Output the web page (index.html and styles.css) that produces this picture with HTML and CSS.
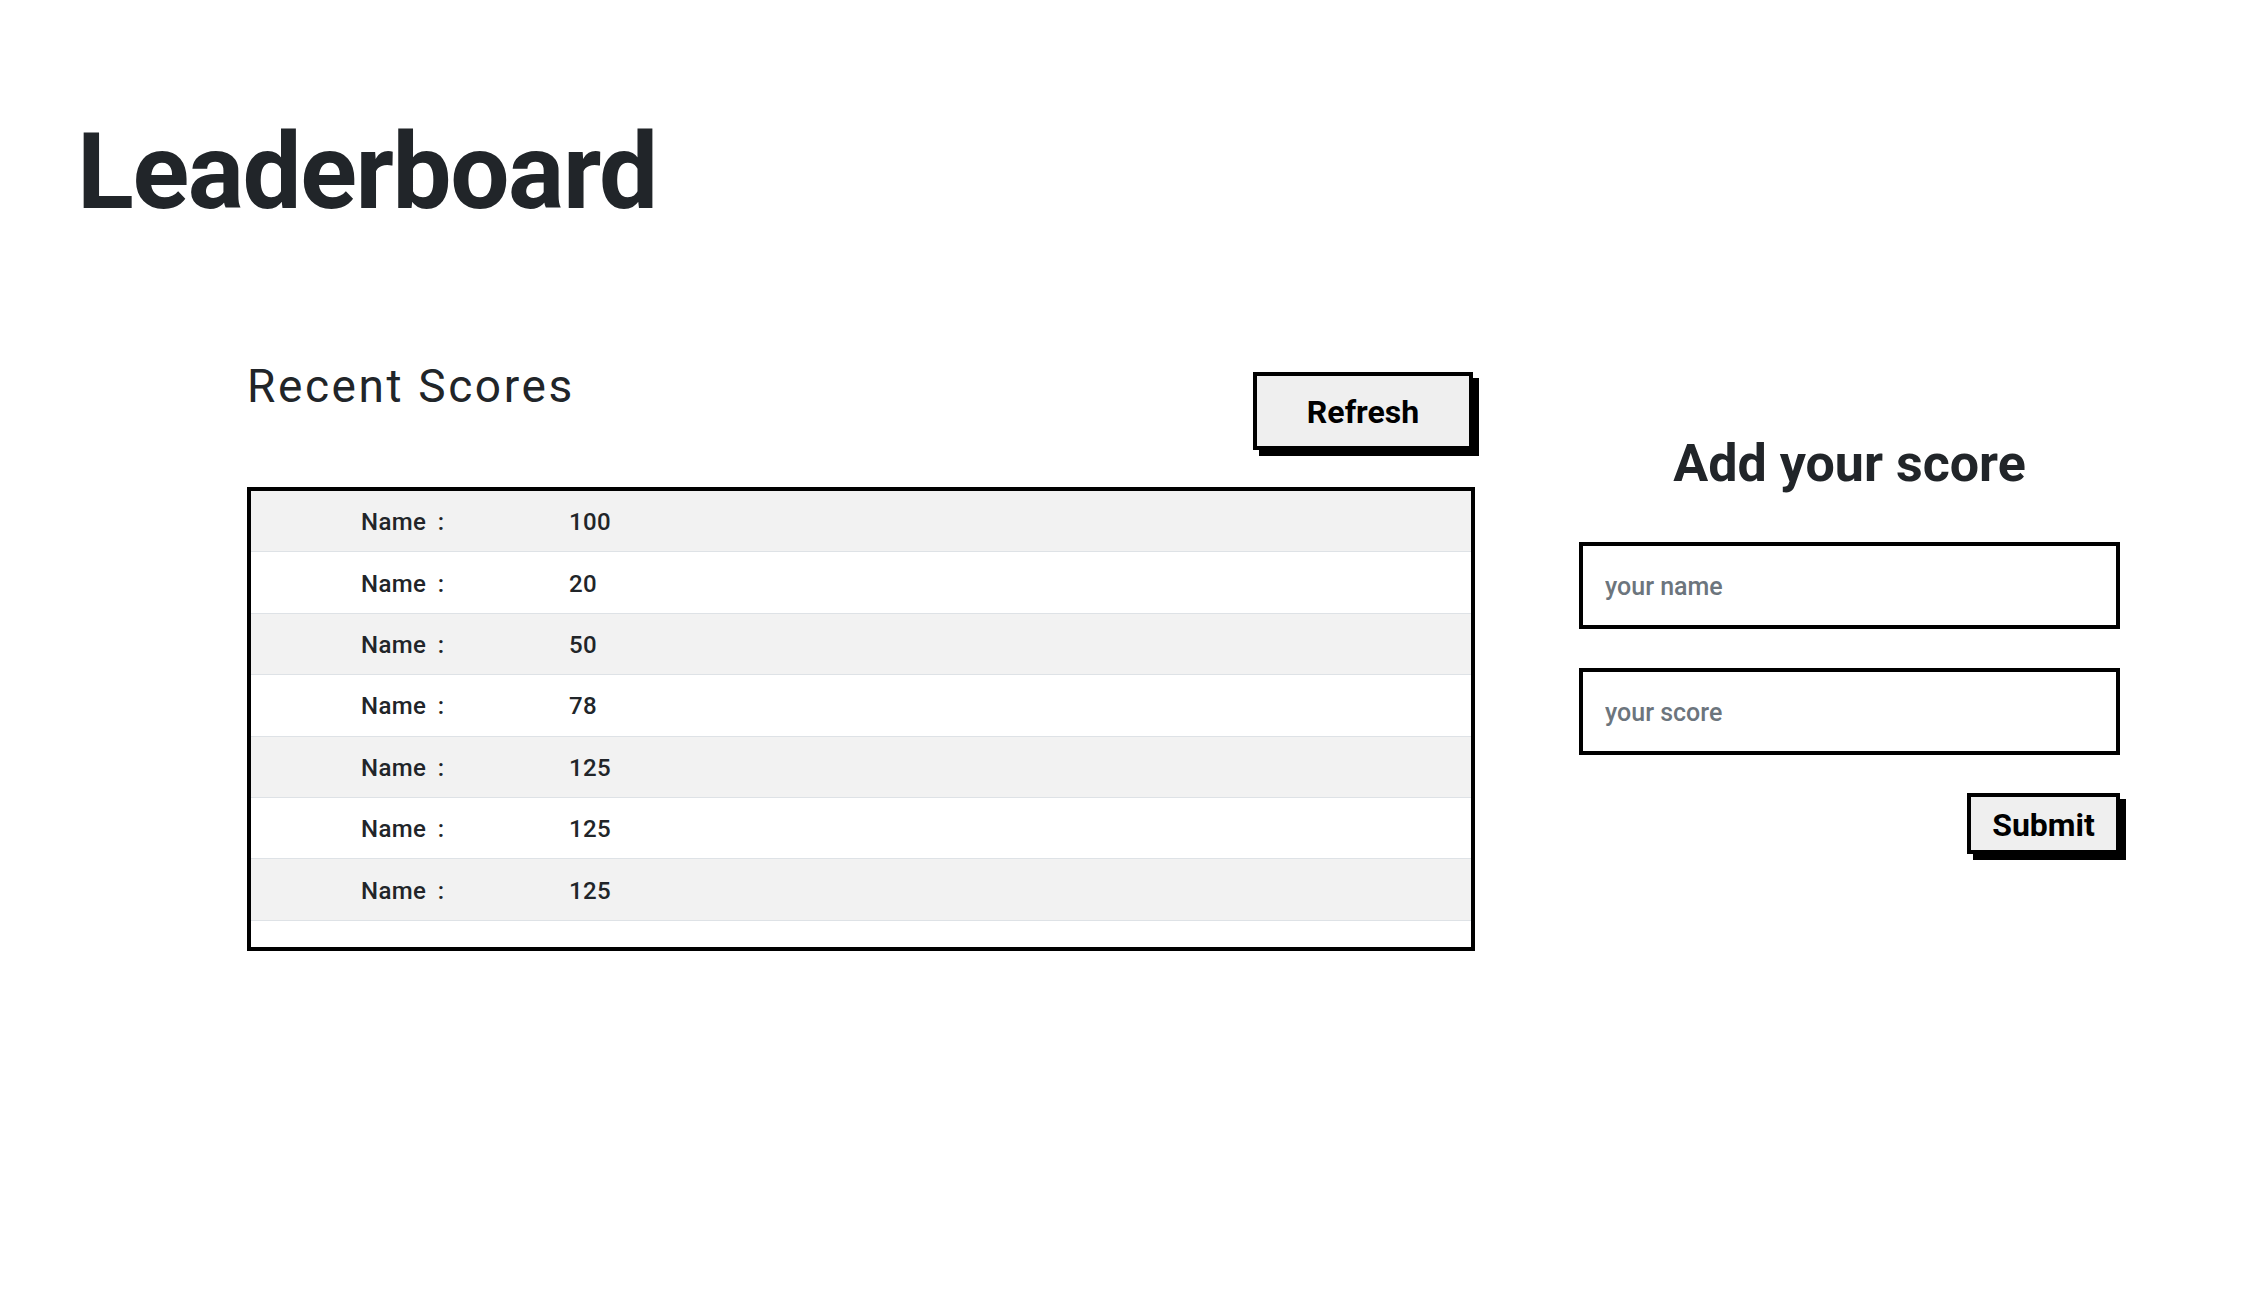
FILE: index.html
```html
<!DOCTYPE html>
<html lang="en">
<head>
<meta charset="utf-8">
<title>Leaderboard</title>
<link rel="stylesheet" href="styles.css">
</head>
<body>
<div class="page">
  <h1 class="title">Leaderboard</h1>
  <main class="main">
    <section class="scores">
      <div class="scores-head">
        <h2 class="scores-title">Recent Scores</h2>
        <button class="btn btn-refresh" type="button">Refresh</button>
      </div>
      <div class="table">
        <div class="row"><span class="name">Name :</span><span class="score">100</span></div>
        <div class="row"><span class="name">Name :</span><span class="score">20</span></div>
        <div class="row"><span class="name">Name :</span><span class="score">50</span></div>
        <div class="row"><span class="name">Name :</span><span class="score">78</span></div>
        <div class="row"><span class="name">Name :</span><span class="score">125</span></div>
        <div class="row"><span class="name">Name :</span><span class="score">125</span></div>
        <div class="row"><span class="name">Name :</span><span class="score">125</span></div>
      </div>
    </section>
    <section class="add">
      <h2 class="add-title">Add your score</h2>
      <form class="add-form">
        <input class="field" type="text" placeholder="your name">
        <input class="field" type="text" placeholder="your score">
        <div class="actions"><button class="btn btn-submit" type="button">Submit</button></div>
      </form>
    </section>
  </main>
</div>
</body>
</html>
```

FILE: styles.css
```css
html, body {
  margin: 0;
  padding: 0;
  background: #ffffff;
}

body {
  font-family: Roboto, "Open Sans", sans-serif;
  color: #212529;
}

.page {
  min-height: 1290px;
}

.title {
  margin: 0;
  padding: 120px 0 0 77px;
  font-size: 105px;
  line-height: 105px;
  font-weight: 700;
  letter-spacing: -1.4px;
}

.main {
  display: flex;
  margin-top: 138px;
  padding-left: 247px;
}

.scores {
  width: 1228px;
}

.scores-head {
  display: flex;
  justify-content: space-between;
  align-items: flex-start;
  height: 87px;
}

.scores-title {
  margin: 0;
  font-size: 46px;
  line-height: 46px;
  font-weight: 400;
  letter-spacing: 2.6px;
}

.btn {
  box-sizing: border-box;
  border: 4px solid #000;
  background: #efefef;
  box-shadow: 6px 6px 0 #000;
  font-family: Roboto, "Open Sans", sans-serif;
  font-weight: 700;
  font-size: 32px;
  color: #000;
  padding: 0;
  border-radius: 0;
  cursor: pointer;
}

.btn-refresh {
  margin-top: 9px;
  margin-right: 2px;
  width: 220px;
  height: 78px;
}

.btn-refresh,
.btn-submit {
  padding-top: 2px;
}

.table {
  margin-top: 37px;
  border: 4px solid #000;
  padding-bottom: 26px;
}

.row {
  box-sizing: border-box;
  display: flex;
  align-items: center;
  height: 61.4px;
  padding-left: 110px;
  padding-top: 2px;
  border-bottom: 1px solid #dee2e6;
  font-size: 24px;
  font-weight: 500;
  letter-spacing: 0.4px;
}

.row:nth-child(odd) {
  background: #f2f2f2;
}

.name {
  width: 208px;
  word-spacing: 5px;
}

.add {
  width: 541px;
  margin-left: 104px;
  display: flex;
  flex-direction: column;
}

.add-title {
  margin: 75px 0 0;
  text-align: center;
  font-size: 52px;
  line-height: 52px;
  font-weight: 700;
}

.add-form {
  margin-top: 52px;
  display: flex;
  flex-direction: column;
  gap: 39px;
}

.field {
  box-sizing: border-box;
  width: 100%;
  height: 87px;
  border: 4px solid #000;
  border-radius: 0;
  padding: 2px 22px 0;
  font-family: Roboto, "Open Sans", sans-serif;
  font-size: 25px;
  font-weight: 500;
  color: #212529;
  background: #fff;
  outline: none;
}

.field::placeholder {
  color: #6c757d;
}

.actions {
  display: flex;
  justify-content: flex-end;
  margin-top: -1px;
}

.btn-submit {
  width: 153px;
  height: 61px;
}
```
